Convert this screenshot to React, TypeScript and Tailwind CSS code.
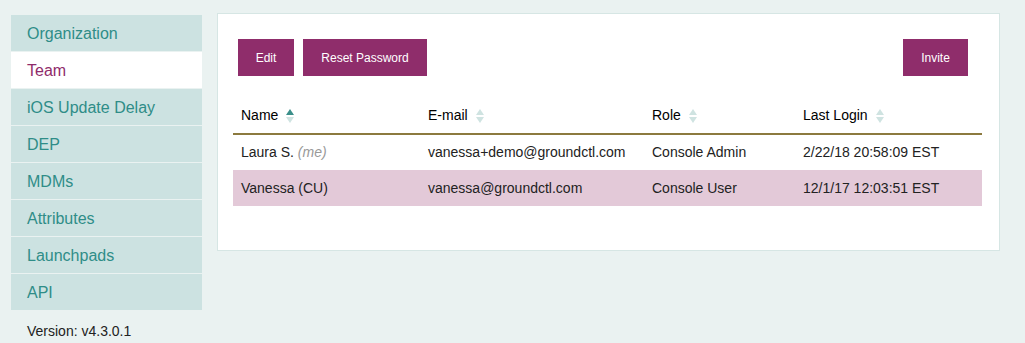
import React from 'react';

const navItems = ['Organization', 'Team', 'iOS Update Delay', 'DEP', 'MDMs', 'Attributes', 'Launchpads', 'API'];

const users = [
    { name: 'Laura S.', me: true, email: 'vanessa+demo@groundctl.com', role: 'Console Admin', login: '2/22/18 20:58:09 EST' },
    { name: 'Vanessa (CU)', me: false, email: 'vanessa@groundctl.com', role: 'Console User', login: '12/1/17 12:03:51 EST' },
];

function SortIcon({ active }: { active?: boolean }) {
    return (
        <svg width="8" height="14" viewBox="0 0 8 14" className="ml-2 inline-block">
            <polygon points="4,0 8,6 0,6" fill={active ? '#3b8f8a' : '#cfe3e1'} />
            <polygon points="0,8 8,8 4,14" fill="#cfe3e1" />
        </svg>
    );
}

export default function App() {
    return (
        <div className="min-h-[343px] bg-[#eaf2f1] flex gap-[15px] pl-[11px] pt-[13px] pr-[25px]" style={{ fontFamily: '"Liberation Sans", Arial, sans-serif' }}>
            <aside className="w-[191px] shrink-0 pt-[2px]">
                <nav className="flex flex-col gap-px">
                    {navItems.map((item) => (
                        <div
                            key={item}
                            className={`h-9 flex items-center pl-4 pt-[2px] text-[16px] ${item === 'Team' ? 'bg-white text-[#8f2b6b]' : 'bg-[#cce2e1] text-[#2f8d88]'}`}
                        >
                            {item}
                        </div>
                    ))}
                </nav>
                <p className="mt-[11px] pl-4 text-[14px] text-[#222]">Version: v4.3.0.1</p>
            </aside>

            <main className="flex-1 h-[238px] bg-white border border-[#d6e6e4] px-[15px] pt-[25px]">
                <div className="flex items-center px-[5px]">
                    <button className="h-[37px] w-[56px] bg-[#8f2d6b] text-white text-[12px]">Edit</button>
                    <button className="h-[37px] w-[124px] ml-[9px] bg-[#8f2d6b] text-white text-[12px]">Reset Password</button>
                    <button className="h-[37px] w-[65px] ml-auto mr-[11px] bg-[#8f2d6b] text-white text-[12px]">Invite</button>
                </div>

                <table className="mt-[21px] w-[749px] text-[14px] text-[#222] border-collapse">
                    <thead>
                        <tr className="border-b-2 border-[#8c7a3f] text-black">
                            <th className="w-[187px] h-[37px] pl-2 text-left font-normal">Name<SortIcon active /></th>
                            <th className="w-[224px] pl-2 text-left font-normal">E-mail<SortIcon /></th>
                            <th className="w-[151px] pl-2 text-left font-normal">Role<SortIcon /></th>
                            <th className="pl-2 text-left font-normal">Last Login<SortIcon /></th>
                        </tr>
                    </thead>
                    <tbody>
                        {users.map((u, i) => (
                            <tr key={u.email} className={i === 1 ? 'bg-[#e3c9d8]' : ''}>
                                <td className="h-9 pl-2">
                                    {u.name}
                                    {u.me && <span className="italic text-[#999]"> (me)</span>}
                                </td>
                                <td className="pl-2">{u.email}</td>
                                <td className="pl-2">{u.role}</td>
                                <td className="pl-2">{u.login}</td>
                            </tr>
                        ))}
                    </tbody>
                </table>
            </main>
        </div>
    );
}
